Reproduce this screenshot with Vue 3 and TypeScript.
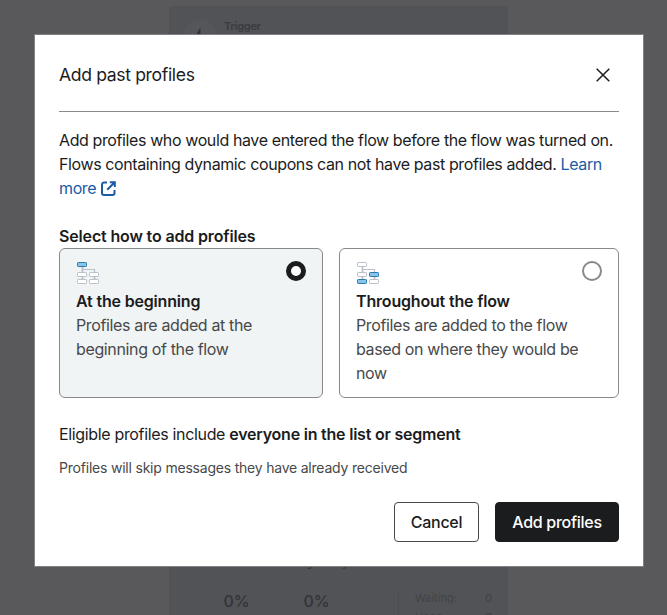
<script setup lang="ts">
import { ref } from 'vue'

interface Box { x: number; y: number }
interface Option { id: string; title: string; lines: string[]; active: number[] }

const boxes: Box[] = [
  { x: 0.5, y: 0.5 },
  { x: 0.5, y: 10.5 },
  { x: 12.5, y: 10.5 },
  { x: 0.5, y: 17.5 },
  { x: 12.5, y: 17.5 },
]
const options: Option[] = [
  { id: 'beginning', title: 'At the beginning', lines: ['Profiles are added at the', 'beginning of the flow'], active: [0] },
  { id: 'throughout', title: 'Throughout the flow', lines: ['Profiles are added to the flow', 'based on where they would be', 'now'], active: [2, 3] },
]
const selected = ref('beginning')
</script>

<template>
  <main class="stage">
    <div class="backdrop">
      <section class="node trigger">
        <span class="bolt"><svg width="24" height="24" viewBox="0 0 24 24"><path d="M12.500 4.500 6 15h5l-1 7 7-10h-4.500z" /></svg></span>
        <b class="trigger-label">Trigger</b>
      </section>
      <section class="node stats">
        <span class="fragment">High body</span>
        <strong class="rate first">0%</strong>
        <strong class="rate second">0%</strong>
        <div class="counts">
          <p><span>Waiting:</span><b>0</b></p>
          <p><span>Heap:</span><b>0</b></p>
        </div>
      </section>
    </div>

    <div class="modal" role="dialog" aria-labelledby="title">
      <header class="head">
        <h1 id="title">Add past profiles</h1>
        <button class="close" aria-label="Close">
          <svg width="14" height="14" viewBox="0 0 14 14"><path d="M.7.7 13.3 13.3M13.3.7.7 13.3" /></svg>
        </button>
      </header>

      <div class="intro">
        <div class="line">Add profiles who would have entered the flow before the flow was turned on.</div>
        <div class="line">Flows containing dynamic coupons can not have past profiles added. <a>Learn</a></div>
        <div class="line"><a>more <svg class="ext" width="15" height="15" viewBox="0 0 15 15"><path d="M6 1.500H3a2 2 0 0 0-2 2v8.500a2 2 0 0 0 2 2h8.500a2 2 0 0 0 2-2V9" /><path d="M8.800 1.200h5V6M13.500 1.500 6.200 8.800" /></svg></a></div>
      </div>

      <h2>Select how to add profiles</h2>
      <div class="options">
        <label v-for="o in options" :key="o.id" class="card" :class="{ on: selected === o.id }" @click="selected = o.id">
          <span class="card-top">
            <svg class="tree" width="23" height="23" viewBox="0 0 23 23">
              <path class="link" d="M5.500 5v12M17.500 14.500v3" />
              <path class="branch" d="M5.500 7.500h12v3" />
              <rect v-for="(b, i) in boxes" :key="i" :x="b.x" :y="b.y" width="9" height="4" rx=".7" :class="{ lit: o.active.includes(i) }" />
            </svg>
            <span class="radio"></span>
          </span>
          <b class="card-title">{{ o.title }}</b>
          <span v-for="t in o.lines" :key="t" class="card-line">{{ t }}</span>
        </label>
      </div>

      <p class="eligible">Eligible profiles include <b>everyone in the list or segment</b></p>
      <p class="note">Profiles will skip messages they have already received</p>
      <footer>
        <button class="btn">Cancel</button>
        <button class="btn primary">Add profiles</button>
      </footer>
    </div>
  </main>
</template>

<style>
body { overflow: hidden; }
</style>

<style scoped>
* { box-sizing: border-box; margin: 0; }
.stage { position: relative; width: 667px; height: 615px; padding: 35px 24px 0 35px; overflow: hidden; background: #59595b; font-family: Inter, "Liberation Sans", sans-serif; color: #1b1c1d; }
.backdrop { position: absolute; inset: 0; color: #333438; }
.node { position: absolute; left: 169px; width: 339px; background: #525357; }
.trigger { top: 6px; height: 60px; border-radius: 3px; }
.bolt { position: absolute; left: 15px; top: 13px; width: 32px; height: 32px; padding: 4px; border-radius: 50%; background: #555659; }
.bolt svg { fill: #333438; display: block; }
.trigger-label { position: absolute; left: 55px; top: 12px; font-size: 11px; line-height: 16px; font-weight: 700; letter-spacing: -.35px; color: #3c3d41; }
.stats { top: 500px; height: 115px; overflow: hidden; }
.fragment { position: absolute; left: 126px; top: 55px; font-size: 11px; line-height: 16px; }
.rate { position: absolute; top: 91px; font-size: 16px; line-height: 20px; font-weight: 500; }
.first { left: 54.5px; }
.second { left: 134.5px; }
.counts { position: absolute; left: 229px; top: 92px; width: 94px; height: 40px; padding: 0 0 0 16px; border-left: 1px solid #4b4c50; font-size: 11px; color: #424347; }
.counts p { display: flex; justify-content: space-between; line-height: 13px; margin-bottom: 6px; }
.counts b { font-weight: 500; }
.modal { position: relative; width: 608px; height: 531px; padding: 0 24px; background: #fff; box-shadow: 0 0 0 1px #808184; }
.head { display: flex; align-items: center; justify-content: space-between; height: 77px; padding: 3px 9px 0 0; border-bottom: 1px solid #88898a; }
h1 { font-size: 17.6px; line-height: 28px; font-weight: 400; letter-spacing: -.36px; white-space: nowrap; }
.close { display: flex; padding: 0; border: 0; background: none; }
.close svg { fill: none; stroke: #1b1c1d; stroke-width: 1.5; }
.intro { margin-top: 16px; font-size: 16px; line-height: 24px; }
.line { height: 24px; white-space: nowrap; letter-spacing: -.39px; }
a { color: #1a5ba6; }
.ext { margin-left: .5px; vertical-align: -2px; fill: none; stroke: #1a5ba6; stroke-width: 2; }
h2 { margin-top: 24px; font-size: 16px; line-height: 24px; font-weight: 600; letter-spacing: -.15px; }
.options { display: grid; grid-template-columns: 264px 280px; gap: 16px; height: 150px; }
.card { display: flex; flex-direction: column; padding: 12px 16px; border: 1px solid #88898a; border-radius: 6px; background: #fff; font-size: 16px; line-height: 24px; }
.card.on { background: #f0f4f5; }
.card-top { display: flex; justify-content: space-between; height: 28px; }
.tree { margin: 1px 0 0 1px; fill: none; }
.tree rect { fill: #fff; stroke: #bbc0ca; }
.tree rect.lit { fill: #88c4ec; stroke: #2c7cab; }
.link { stroke: #bbc0ca; stroke-width: 1.8; }
.branch { stroke: #bbc0ca; stroke-width: 1.2; }
.radio { width: 20px; height: 20px; border: 2px solid #88898a; border-radius: 50%; background: #fff; }
.on .radio { border: 5px solid #1b1c1d; }
.card-title { font-weight: 600; letter-spacing: -.18px; white-space: nowrap; }
.card-line { color: #47494b; letter-spacing: -.36px; white-space: nowrap; }
.eligible { margin-top: 24px; font-size: 16px; line-height: 24px; letter-spacing: -.34px; white-space: nowrap; }
.eligible b { font-weight: 600; letter-spacing: -.22px; }
.note { margin-top: 12px; font-size: 14px; line-height: 20px; color: #47494b; letter-spacing: -.21px; }
footer { display: flex; justify-content: flex-end; gap: 16px; margin-top: 24px; }
.btn { width: 85px; height: 40px; padding: 0; border: 1px solid #47494b; border-radius: 4px; background: #fff; color: #1b1c1d; font: 500 16px/24px Inter, "Liberation Sans", sans-serif; letter-spacing: -.28px; }
.primary { width: 124px; border-color: #1b1c1d; background: #1b1c1d; color: #fff; }
</style>
